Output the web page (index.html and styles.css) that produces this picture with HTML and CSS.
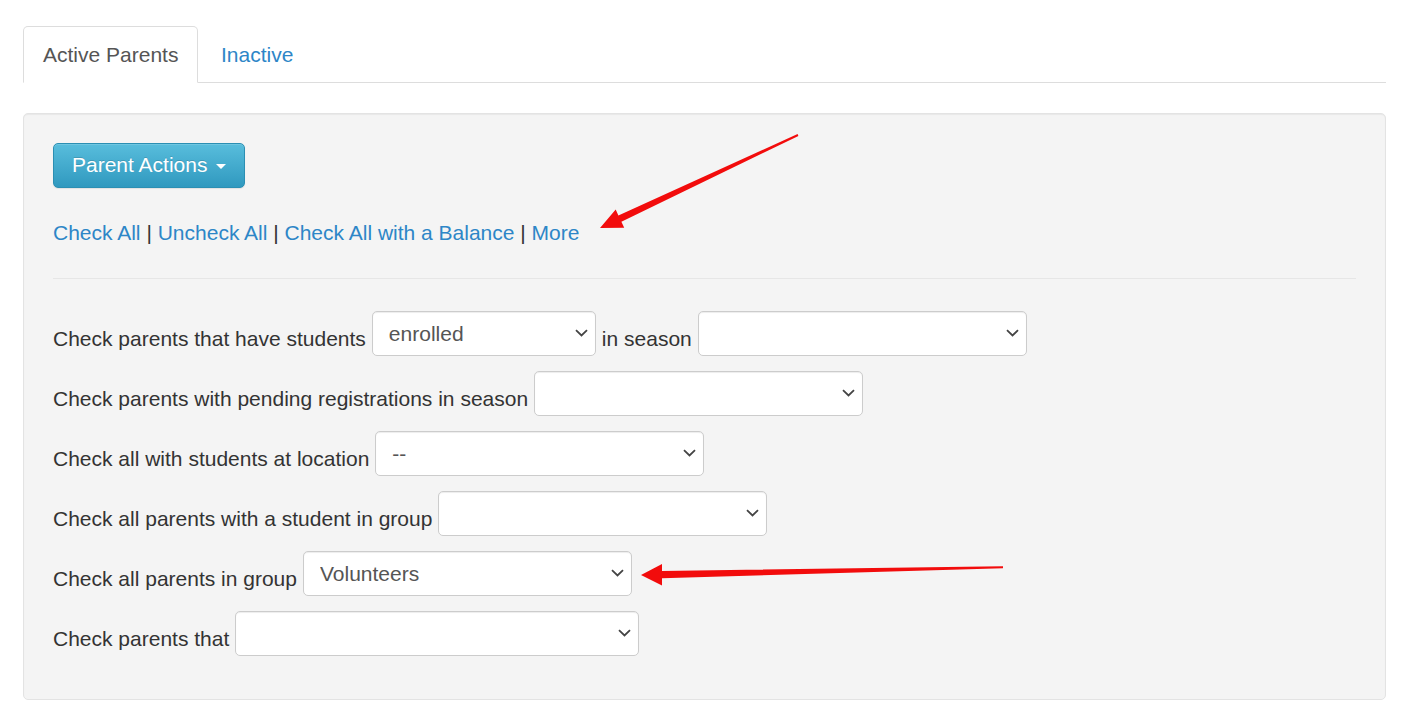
FILE: index.html
```html
<!DOCTYPE html>
<html lang="en">
<head>
<meta charset="utf-8">
<title>Parents</title>
<link rel="stylesheet" href="styles.css">
</head>
<body>
<div class="page">
  <ul class="tabs">
    <li class="tab active">Active Parents</li>
    <li class="tab"><a href="#">Inactive</a></li>
  </ul>
  <div class="well">
    <button class="btn" type="button">Parent Actions <span class="caret"></span></button>
    <div class="links">
      <a href="#">Check All</a> | <a href="#">Uncheck All</a> | <a href="#">Check All with a Balance</a> | <a href="#">More</a>
    </div>
    <hr class="divider">
    <div class="rows">
      <div class="row">
        <span class="label">Check parents that have students</span>
        <select class="sel w224"><option>enrolled</option></select>
        <span class="label">in season</span>
        <select class="sel w329"><option></option></select>
      </div>
      <div class="row">
        <span class="label">Check parents with pending registrations in season</span>
        <select class="sel w329"><option></option></select>
      </div>
      <div class="row">
        <span class="label">Check all with students at location</span>
        <select class="sel w329"><option>--</option></select>
      </div>
      <div class="row">
        <span class="label">Check all parents with a student in group</span>
        <select class="sel w329"><option></option></select>
      </div>
      <div class="row">
        <span class="label">Check all parents in group</span>
        <select class="sel w329"><option>Volunteers</option></select>
      </div>
      <div class="row">
        <span class="label">Check parents that</span>
        <select class="sel w404"><option></option></select>
      </div>
    </div>
  </div>
</div>
<svg class="arrows" width="1402" height="713" viewBox="0 0 1402 713" aria-hidden="true">
  <polygon fill="#f20c0c" points="600,228 624.2,227.7 621.4,221.8 798.4,135.9 797.6,134.1 618.4,215.4 615.7,209.6"/>
  <polygon fill="#f20c0c" points="641,575 662,585.5 662,578.3 1003,568.2 1003,566.2 662,571 662,564"/>
</svg>
</body>
</html>
```

FILE: styles.css
```css
html, body {
  margin: 0;
  padding: 0;
  background: #fff;
}
body {
  font-family: "Liberation Sans", Arial, sans-serif;
  font-size: 21px;
  line-height: 29.7px;
  color: #333;
  position: relative;
}
a {
  color: #2d86c7;
  text-decoration: none;
}
.page {
  width: 1363px;
  padding: 26px 0 0 23px;
}
.tabs {
  display: flex;
  list-style: none;
  margin: 0;
  padding: 0;
  border-bottom: 1px solid #ddd;
}
.tab {
  margin-right: 2.6px;
  margin-bottom: -1px;
  padding: 12.5px 19px;
  border: 1px solid transparent;
  border-radius: 5px 5px 0 0;
}
.tab.active {
  background: #fff;
  color: #555;
  border-color: #ddd #ddd transparent;
}
.well {
  margin-top: 30px;
  padding: 29px 29px 43px;
  background: #f4f4f4;
  border: 1px solid #e3e3e3;
  border-radius: 5px;
  box-shadow: inset 0 1px 1px rgba(0, 0, 0, 0.05);
}
.btn {
  display: block;
  height: 45px;
  margin: 0;
  padding: 0 18px;
  font-family: inherit;
  font-size: 21px;
  line-height: 29.7px;
  color: #fff;
  background: linear-gradient(#58bddc, #3099bf);
  border: 1px solid #2b8fb3;
  border-radius: 5px;
  text-shadow: 0 -1px 0 rgba(0, 0, 0, 0.15);
  box-shadow: inset 0 1px 0 rgba(255, 255, 255, 0.15), 0 1px 1px rgba(0, 0, 0, 0.075);
}
.caret {
  display: inline-block;
  width: 0;
  height: 0;
  margin-left: 2.6px;
  vertical-align: middle;
  border-top: 5.2px solid #fff;
  border-left: 5.2px solid transparent;
  border-right: 5.2px solid transparent;
}
.links {
  margin-top: 30px;
}
.divider {
  margin: 30.5px 0 32px;
  border: 0;
  border-top: 1px solid #e6e6e6;
  height: 0;
}
.rows {
  display: flex;
  flex-direction: column;
  gap: 15px;
}
.row {
  display: flex;
  align-items: flex-start;
  gap: 6px;
}
.label {
  padding-top: 13px;
  white-space: nowrap;
}
.sel {
  -webkit-appearance: none;
  appearance: none;
  height: 45px;
  margin: 0;
  padding: 0 30px 0 16px;
  font-family: inherit;
  font-size: 21px;
  color: #555;
  background-color: #fff;
  background-image: url("data:image/svg+xml,%3Csvg xmlns='http://www.w3.org/2000/svg' width='13' height='8' viewBox='0 0 13 8'%3E%3Cpath d='M1 1.2 L6.5 6.5 L12 1.2' fill='none' stroke='%23444' stroke-width='1.8'/%3E%3C/svg%3E");
  background-repeat: no-repeat;
  background-position: right 7px center;
  background-size: 13px 8px;
  border: 1px solid #ccc;
  border-radius: 5px;
  box-shadow: inset 0 1px 1px rgba(0, 0, 0, 0.075);
}
.w224 { width: 224px; }
.w329 { width: 329px; }
.w404 { width: 404px; }
.arrows {
  position: absolute;
  top: 0;
  left: 0;
  pointer-events: none;
}
```
